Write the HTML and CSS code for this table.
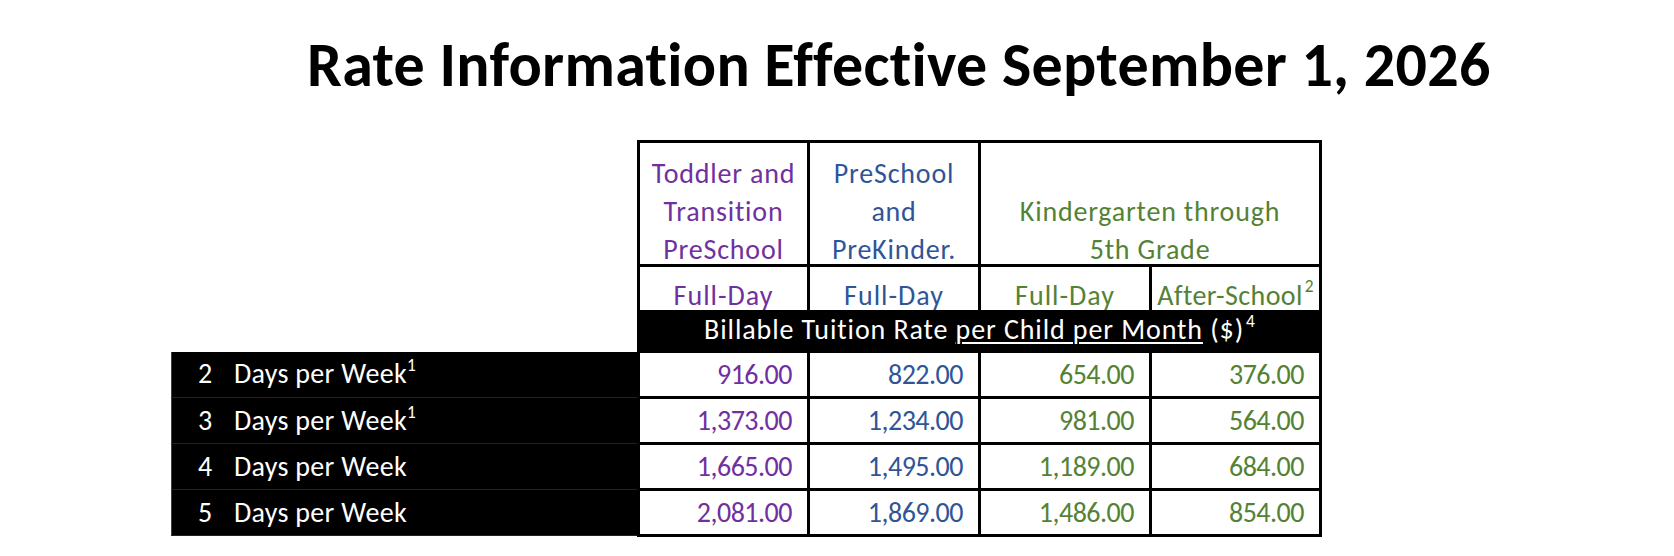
FILE: index.html
```html
<!DOCTYPE html>
<html lang="en">
<head>
<meta charset="utf-8">
<title>Rate Information</title>
<link rel="stylesheet" href="styles.css">
</head>
<body>
<h1 class="title">Rate Information Effective September 1, 2026</h1>
<table class="rates">
  <colgroup>
    <col class="c-label">
    <col class="c-v1">
    <col class="c-v2">
    <col class="c-v3">
    <col class="c-v4">
  </colgroup>
  <thead>
    <tr class="h-groups">
      <th class="blank"></th>
      <th class="grp purple"><div class="lift">Toddler and<br>Transition<br>PreSchool</div></th>
      <th class="grp blue"><div class="lift">PreSchool<br>and<br>PreKinder.</div></th>
      <th class="grp green" colspan="2"><div class="lift">Kindergarten through<br>5th Grade</div></th>
    </tr>
    <tr class="h-types">
      <th class="blank"></th>
      <th class="type purple">Full-Day</th>
      <th class="type blue">Full-Day</th>
      <th class="type green">Full-Day</th>
      <th class="type green after">After-School<sup>2</sup></th>
    </tr>
    <tr class="h-band">
      <th class="blank"></th>
      <th class="band" colspan="4">Billable Tuition Rate <u>per Child per Month</u> ($)<sup>4</sup></th>
    </tr>
  </thead>
  <tbody>
    <tr>
      <th class="label"><span class="num">2</span>Days per Week<sup>1</sup></th>
      <td class="val purple">916.00</td>
      <td class="val blue">822.00</td>
      <td class="val green">654.00</td>
      <td class="val green">376.00</td>
    </tr>
    <tr>
      <th class="label"><span class="num">3</span>Days per Week<sup>1</sup></th>
      <td class="val purple">1,373.00</td>
      <td class="val blue">1,234.00</td>
      <td class="val green">981.00</td>
      <td class="val green">564.00</td>
    </tr>
    <tr>
      <th class="label"><span class="num">4</span>Days per Week</th>
      <td class="val purple">1,665.00</td>
      <td class="val blue">1,495.00</td>
      <td class="val green">1,189.00</td>
      <td class="val green">684.00</td>
    </tr>
    <tr>
      <th class="label"><span class="num">5</span>Days per Week</th>
      <td class="val purple">2,081.00</td>
      <td class="val blue">1,869.00</td>
      <td class="val green">1,486.00</td>
      <td class="val green">854.00</td>
    </tr>
  </tbody>
</table>
</body>
</html>
```

FILE: styles.css
```css
html, body {
  margin: 0;
  padding: 0;
  background: #ffffff;
}

body {
  font-family: "Carlito", "Lato", "Liberation Sans", sans-serif;
  font-variant-ligatures: none;
  font-feature-settings: "liga" 0, "clig" 0;
  color: #000;
}

.title {
  margin: 0;
  padding: 34px 0 0 307px;
  font-size: 62px;
  line-height: 62px;
  font-weight: 700;
  letter-spacing: 0.3px;
  white-space: nowrap;
}

.rates {
  margin: 44px 0 0 171px;
  border-collapse: collapse;
  table-layout: fixed;
  font-size: 28px;
}

.c-label { width: 467px; }
.c-v1 { width: 170px; }
.c-v2 { width: 171px; }
.c-v3 { width: 171px; }
.c-v4 { width: 170px; }

.rates th,
.rates td {
  padding: 0;
  font-weight: 400;
}

.purple { color: #7030a0; }
.blue { color: #2f5597; }
.green { color: #548235; }

.blank {
  border: none;
  background: #fff;
}

.h-groups { height: 124px; }

.grp {
  border: 3px solid #000;
  vertical-align: bottom;
  text-align: center;
  line-height: 38px;
  letter-spacing: 0.8px;
}

.lift {
  margin-bottom: -5px;
}

.h-types { height: 44px; }

.type {
  border-left: 3px solid #000;
  border-right: 3px solid #000;
  vertical-align: bottom;
  text-align: center;
  line-height: 28px;
  letter-spacing: 1px;
}

.type.after {
  border-left: 1px dotted #555;
  letter-spacing: 0.4px;
}

.h-band { height: 42px; }

.band {
  background: #000;
  color: #fff;
  text-align: center;
  line-height: 28px;
  border-left: 3px solid #000;
  border-right: 3px solid #000;
  letter-spacing: 0.9px;
}

.band u {
  text-underline-offset: 3px;
  text-decoration-thickness: 2px;
}

sup {
  font-size: 0.62em;
  line-height: 0;
  vertical-align: 0.7em;
  margin-left: 2px;
  letter-spacing: 0;
}

.label sup {
  margin-left: 0;
}

.rates tbody tr { height: 46px; }

.label {
  background: #000;
  color: #fff;
  text-align: left;
  padding-left: 26px !important;
  line-height: 28px;
  letter-spacing: 0.3px;
  border-left: 1px solid #444;
  border-bottom: 1px solid #222;
}

.num {
  display: inline-block;
  width: 36px;
}

.val {
  border: 3px solid #000;
  text-align: right;
  padding-right: 15px !important;
  font-size: 28px;
  line-height: 28px;
  letter-spacing: -0.5px;
}
```
